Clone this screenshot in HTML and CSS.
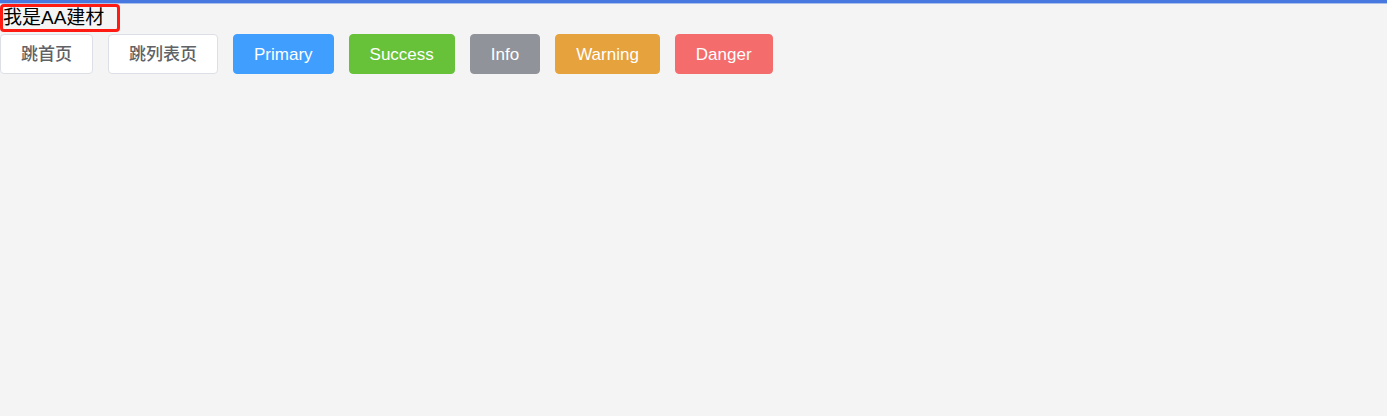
FILE: index.html
```html
<!DOCTYPE html>
<html lang="zh-CN">
<head>
  <meta charset="UTF-8">
  <title>AA建材</title>
  <link rel="stylesheet" href="styles.css">
</head>
<body>
  <div class="topbar"></div>

  <div class="title">我是AA建材</div>

  <div class="btn-row">
    <button class="btn">跳首页</button>
    <button class="btn">跳列表页</button>
    <button class="btn btn-primary">Primary</button>
    <button class="btn btn-success">Success</button>
    <button class="btn btn-info">Info</button>
    <button class="btn btn-warning">Warning</button>
    <button class="btn btn-danger">Danger</button>
  </div>
</body>
</html>
```

FILE: styles.css
```css
body {
  margin: 0;
  padding: 0;
  background-color: #f4f4f4;
  font-family: "Liberation Sans", Arial, "Noto Sans CJK SC", sans-serif;
}

.topbar {
  height: 3px;
  background-color: #4678df;
  border-bottom: 1px solid #a9c0ea;
}

.title {
  width: 114px;
  margin: 0;
  font-size: 19px;
  line-height: 22px;
  color: #000;
  border: 3px solid #ff1a12;
  border-radius: 4px;
}

.btn-row {
  display: flex;
  gap: 15px;
  margin-top: 2px;
}

.btn {
  height: 40px;
  padding: 0 20px;
  font-family: "Liberation Sans", Arial, "Noto Sans CJK SC", sans-serif;
  font-size: 17px;
  font-weight: 500;
  line-height: 1;
  color: #606266;
  background-color: #fff;
  border: 1px solid #dcdfe6;
  border-radius: 4px;
  cursor: pointer;
}

.btn-primary {
  color: #fff;
  background-color: #409eff;
  border-color: #409eff;
}

.btn-success {
  color: #fff;
  background-color: #67c23a;
  border-color: #67c23a;
}

.btn-info {
  color: #fff;
  background-color: #909399;
  border-color: #909399;
}

.btn-warning {
  color: #fff;
  background-color: #e6a23c;
  border-color: #e6a23c;
}

.btn-danger {
  color: #fff;
  background-color: #f56c6c;
  border-color: #f56c6c;
}
```
